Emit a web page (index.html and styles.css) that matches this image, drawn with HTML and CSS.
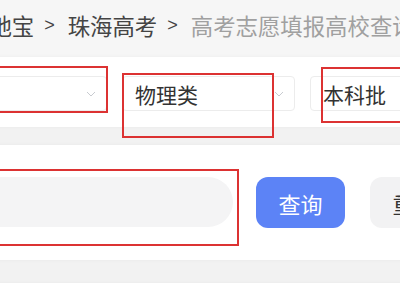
FILE: index.html
```html
<!DOCTYPE html>
<html lang="zh">
<head>
<meta charset="utf-8">
<link rel="stylesheet" href="styles.css">
</head>
<body>
<div class="page">
  <nav class="crumbs">
    <span class="crumb">本地宝</span>
    <span class="sep">&gt;</span>
    <span class="crumb">珠海高考</span>
    <span class="sep">&gt;</span>
    <span class="crumb current">高考志愿填报高校查询</span>
  </nav>
  <section class="card filters">
    <div class="select"><span class="value"></span><svg class="chev" width="10" height="6" viewBox="0 0 10 6"><polyline points="1,1 5,5 9,1" fill="none" stroke="#c8cbd0" stroke-width="1"/></svg></div>
    <div class="select"><span class="value">物理类</span><svg class="chev" width="10" height="6" viewBox="0 0 10 6"><polyline points="1,1 5,5 9,1" fill="none" stroke="#c8cbd0" stroke-width="1"/></svg></div>
    <div class="select"><span class="value">本科批</span><svg class="chev" width="10" height="6" viewBox="0 0 10 6"><polyline points="1,1 5,5 9,1" fill="none" stroke="#c8cbd0" stroke-width="1"/></svg></div>
  </section>
  <section class="card search">
    <div class="input"></div>
    <button class="btn primary">查询</button>
    <button class="btn plain">重置</button>
  </section>
  <section class="card rest"></section>
</div>
<div class="mark m1"></div>
<div class="mark m2"></div>
<div class="mark m3"></div>
<div class="mark m4"></div>
</body>
</html>
```

FILE: styles.css
```css
html, body {
  margin: 0;
  padding: 0;
  width: 400px;
  height: 300px;
  overflow: hidden;
  background: #f2f2f2;
  font-family: "Noto Sans CJK SC", "Noto Sans", sans-serif;
}
body { position: relative; }
.page {
  margin-left: -66px;
  width: 560px;
}
.crumbs {
  height: 50px;
  padding-bottom: 7px;
  padding-left: 33px;
  display: flex;
  align-items: center;
  background: #f6f6f6;
  font-size: 22.4px;
  color: #444;
  white-space: nowrap;
}
.sep {
  font-family: "Liberation Sans", sans-serif;
  font-size: 18px;
  margin: 0 13px 0 10px;
  color: #444;
}
.current { color: #a0a0a0; }
.card {
  background: #fff;
  box-shadow: 0 0 4px rgba(0,0,0,0.04);
}
.filters {
  height: 70px;
  box-sizing: border-box;
  padding-top: 19px;
  display: flex;
  gap: 15px;
}
.select {
  width: 173px;
  height: 35px;
  box-sizing: border-box;
  border: 1px solid #ececec;
  border-radius: 4px;
  display: flex;
  align-items: center;
  justify-content: space-between;
  padding: 0 10px 0 12px;
  font-size: 21px;
  color: #333;
}
.chev { flex: none; }
.search {
  margin-top: 18px;
  height: 115px;
  box-sizing: border-box;
  padding-top: 32px;
  display: flex;
  align-items: flex-start;
}
.input {
  width: 299px;
  height: 50px;
  border-radius: 25px;
  background: #f4f4f5;
}
.btn {
  width: 89px;
  height: 51px;
  border: 0;
  border-radius: 12px;
  font-family: "Noto Sans CJK SC", sans-serif;
  font-size: 22px;
  padding: 0;
}
.primary {
  margin-left: 23px;
  background: #5c83f6;
  color: #fff;
}
.plain {
  margin-left: 25px;
  background: #f2f2f3;
  color: #333;
}
.rest {
  margin-top: 23px;
  height: 40px;
}
.mark {
  position: absolute;
  border: 2px solid #dc3232;
  box-sizing: border-box;
}
.m1 { left: -10px; top: 66px; width: 118px; height: 47px; }
.m2 { left: 122px; top: 73px; width: 152px; height: 65px; }
.m3 { left: 321px; top: 67px; width: 120px; height: 56px; }
.m4 { left: -10px; top: 169px; width: 249px; height: 77px; }
```
